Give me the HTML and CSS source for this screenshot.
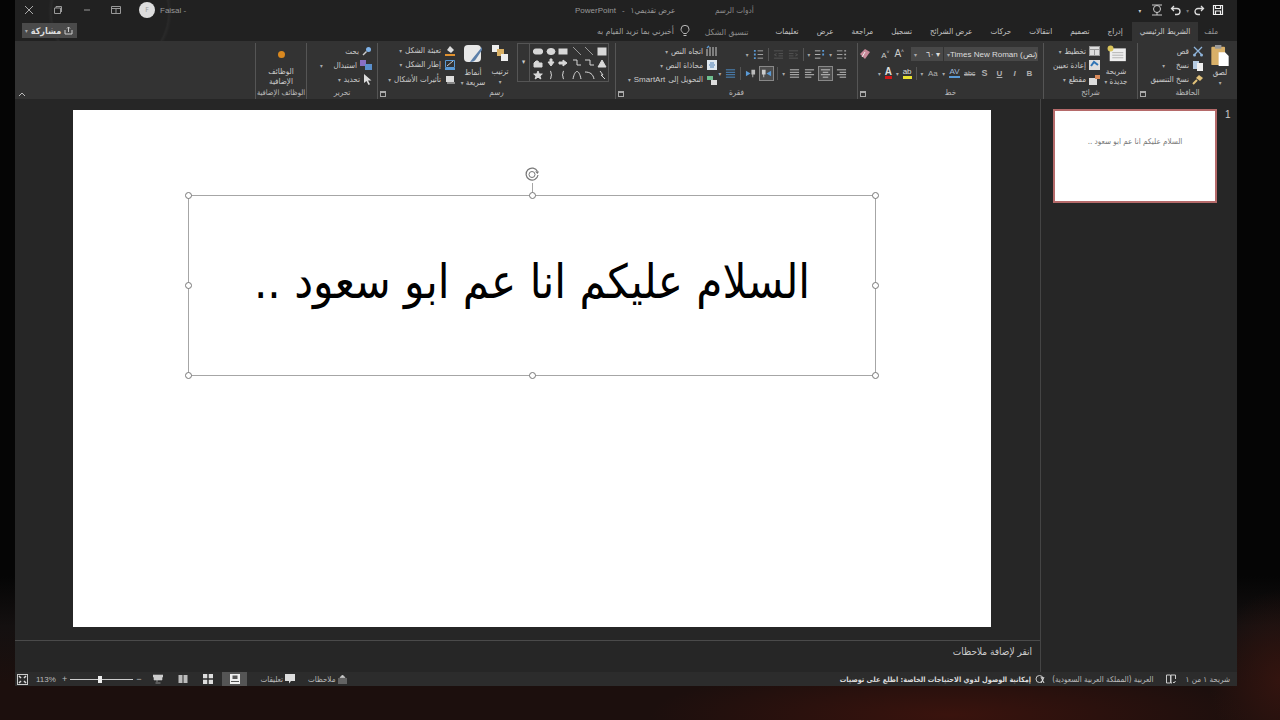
FILE: index.html
```html
<!DOCTYPE html>
<html lang="ar">
<head>
  <meta charset="utf-8">
  <title>PowerPoint</title>
  <link rel="stylesheet" href="styles.css">
</head>
<body>
  <div class="window">

    <div class="titlebar">
      <div class="win-btns">
        <svg width="10" height="10" viewBox="0 0 10 10"><path d="M1 1l8 8M9 1l-8 8" stroke="#aaa" fill="none"/></svg>
        <svg width="10" height="10" viewBox="0 0 10 10"><path d="M1.5 3h6v5.5h-6zM3 3V1.5h5.5V7" stroke="#999" fill="none"/></svg>
        <svg width="10" height="10" viewBox="0 0 10 10"><path d="M2 5h6" stroke="#999" fill="none"/></svg>
        <svg width="10" height="10" viewBox="0 0 10 10"><path d="M.5 1.5h9v7h-9zM.5 3.5h9M5 3.5v5" stroke="#999" fill="none"/></svg>
      </div>
      <div class="avatar">F</div>
      <div class="user">Faisal -</div>
      <div class="doc-title"><span>PowerPoint</span> <span>-</span> <span dir="rtl">عرض تقديمي١</span></div>
      <div class="tools-title">أدوات الرسم</div>
      <div class="qat">
        <span class="qat-more">▾</span>
        <svg class="touch" width="12" height="12" viewBox="0 0 12 12"><circle cx="6" cy="5" r="3.5" stroke="#ccc" fill="none"/><path d="M1 1h10M1 11h10M6 8v3" stroke="#ccc"/></svg>
        <svg width="12" height="12" viewBox="0 0 12 12"><path d="M4 2L1.5 4.5 4 7M2 4.5h5a3 3 0 0 1 0 6H5" stroke="#ddd" stroke-width="1.3" fill="none"/></svg>
        <span class="qat-more dim">▾</span>
        <svg width="12" height="12" viewBox="0 0 12 12"><path d="M8 2l2.500 2.500L8 7M10 4.500H5a3 3 0 0 0 0 6h2" stroke="#ddd" stroke-width="1.3" fill="none"/></svg>
        <svg class="save" width="12" height="12" viewBox="0 0 12 12"><path d="M1.5 1.5h9v9h-9zM3.5 1.5v3h5v-3M3.5 10.5V7h5v3.5" stroke="#eee" stroke-width="1.2" fill="none"/></svg>
      </div>
    </div>

    <div class="tabrow">
      <div class="share">
        <span class="caret">▾</span><b>مشاركة</b>
        <svg width="9" height="9" viewBox="0 0 9 9"><path d="M1 4v4h7V4M4.5 6V1M3 2.500L4.500 1 6 2.500" stroke="#ccc" fill="none"/></svg>
      </div>
      <div class="tell">
        <span>أخبرني بما تريد القيام به</span>
        <svg width="10" height="12" viewBox="0 0 10 12"><path d="M3.500 8.500C2.500 7 1 6.200 1 4.300a4 4 0 0 1 8 0C9 6.200 7.500 7 6.500 8.500zM3.500 10.500h3" stroke="#bbb" fill="none"/></svg>
      </div>
      <div class="tabs" dir="rtl">
        <span class="tab tab-file">ملف</span>
        <span class="tab tab-active">الشريط الرئيسي</span>
        <span class="tab">إدراج</span>
        <span class="tab">تصميم</span>
        <span class="tab">انتقالات</span>
        <span class="tab">حركات</span>
        <span class="tab">عرض الشرائح</span>
        <span class="tab">تسجيل</span>
        <span class="tab">مراجعة</span>
        <span class="tab">عرض</span>
        <span class="tab">تعليمات</span>
        <span class="tab tab-format">تنسيق الشكل</span>
      </div>
    </div>

    <div class="ribbon">
      <div class="collapse-area">
        <svg width="8" height="5" viewBox="0 0 8 5"><path d="M1 4l3-3 3 3" stroke="#bbb" fill="none"/></svg>
      </div>

      <section class="group g-addins">
        <div class="g-body addin">
          <i class="dot"></i>
          <span>الوظائف<br>الإضافية</span>
        </div>
        <div class="g-label">الوظائف الإضافية</div>
      </section>

      <section class="group g-edit">
        <div class="g-body lines">
          <div class="line"><span>بحث</span>
            <svg width="10" height="10" viewBox="0 0 10 10"><circle cx="6.5" cy="3.5" r="2.5" fill="#7fb2e8"/><path d="M4.5 5.5L1 9" stroke="#ccc" stroke-width="1.5"/></svg></div>
          <div class="line"><span class="caret wide">▾</span><span>استبدال</span>
            <svg width="12" height="10" viewBox="0 0 12 10"><rect x="0" y="0" width="6" height="6" fill="#8a6fc4"/><rect x="5" y="4" width="7" height="6" fill="#5a8fcc"/></svg></div>
          <div class="line"><span class="caret">▾</span><span>تحديد</span>
            <svg width="9" height="11" viewBox="0 0 9 11"><path d="M1 0v9l2.500-2 2 4 1.500-.8-2-3.700h3.500z" fill="#ddd"/></svg></div>
        </div>
        <div class="g-label">تحرير</div>
      </section>

      <section class="group g-draw">
        <div class="g-body draw">
          <div class="lines">
            <div class="line"><span class="caret">▾</span><span>تعبئة الشكل</span>
              <svg width="12" height="11" viewBox="0 0 12 11"><path d="M3 5l3-4 4 4-3 3z" fill="#ddd"/><rect x="1" y="9" width="10" height="2" fill="#e0912f"/></svg></div>
            <div class="line"><span class="caret">▾</span><span>إطار الشكل</span>
              <svg width="12" height="11" viewBox="0 0 12 11"><path d="M1.5 1.5h9v7h-9z" stroke="#5a9ad6" fill="none"/><path d="M3 7l6-5" stroke="#ccc"/><rect x="1" y="9" width="10" height="2" fill="#5a9ad6"/></svg></div>
            <div class="line"><span class="caret">▾</span><span>تأثيرات الأشكال</span>
              <svg width="12" height="11" viewBox="0 0 12 11"><rect x="2" y="2" width="8" height="6" fill="#ddd"/><rect x="3" y="8" width="8" height="2" fill="#888"/></svg></div>
          </div>
          <div class="big styles">
            <svg width="20" height="20" viewBox="0 0 20 20"><rect x="1" y="1" width="17" height="17" rx="4" fill="#e8e8e8"/><path d="M19 3L10 14l-3 4c3 0 5-1 6-3l6-9z" fill="#5b7ea8"/></svg>
            <span>أنماط<br><i class="caret">▾</i> سريعة</span>
          </div>
          <div class="big arrange">
            <svg width="18" height="18" viewBox="0 0 18 18"><rect x="1" y="1" width="7" height="7" fill="#eee"/><rect x="6" y="5" width="7" height="7" fill="#d9b064"/><rect x="10" y="10" width="7" height="7" fill="#eee"/></svg>
            <span>ترتيب</span><span class="caret">▾</span>
          </div>
          <div class="gallery">
            <div class="gal-more">▾</div>
            <svg width="78" height="38" viewBox="0 0 78 38">
              <g fill="#d8d8d8" stroke="#d8d8d8">
                <rect x="3.5" y="5" width="9" height="5" rx="2"/>
                <ellipse cx="21" cy="7.5" rx="4" ry="3"/>
                <rect x="29" y="5" width="8" height="5"/>
                <path d="M43 3l8 8M55 3l8 8" fill="none" stroke="#999"/>
                <rect x="68" y="4" width="8" height="7"/>
                <path d="M4 23v-4l2-2h2l1 2h3v4z"/>
                <path d="M20 15v3h-2l3 4 3-4h-2v-3z"/>
                <path d="M29 18h4v-2l4 3-4 3v-2h-4z"/>
                <path d="M43 16h4v5h4M55 16h5v5h4" fill="none"/>
                <path d="M68 23l4-7 4 7z"/>
                <path d="M8 27l1.300 3h3l-2.400 2 1 3-2.900-1.800L5.100 35l1-3-2.400-2h3z"/>
                <path d="M20 27c2 0 0 4 2 4-2 0 0 4-2 4M34 27c-2 0 0 4-2 4 2 0 0 4 2 4M43 35c2-10 6-10 8 0M55 28c5 0 8 2 9 7" fill="none"/>
                <path d="M70 27l3 4-2 0 4 4" fill="none"/>
              </g>
            </svg>
          </div>
        </div>
        <div class="g-label">رسم</div>
        <i class="launcher"></i>
      </section>

      <section class="group g-para">
        <div class="g-body para">
          <div class="lines">
            <div class="line"><span class="caret">▾</span><span>اتجاه النص</span>
              <svg width="12" height="12" viewBox="0 0 12 12"><path d="M1 11V4M4 11V2M7 11V2M10 11V2" stroke="#ccc"/><path d="M1 3l2-2" stroke="#5a9ad6" stroke-width="1.5"/></svg></div>
            <div class="line"><span class="caret">▾</span><span>محاذاة النص</span>
              <svg width="12" height="12" viewBox="0 0 12 12"><rect x="1" y="1" width="10" height="10" fill="#dfe8f0"/><path d="M4 4h4M3 6h6M4 8h4" stroke="#4a7fb5"/></svg></div>
            <div class="line"><span class="caret">▾</span><span class="latin">SmartArt</span><span>التحويل إلى</span>
              <svg width="12" height="12" viewBox="0 0 12 12"><rect x="1" y="2" width="6" height="4" fill="#6fbf8f"/><rect x="5" y="6" width="6" height="5" fill="#ddd"/></svg></div>
          </div>
          <div class="para-rows">
            <div class="tools">
              <span class="caret">▾</span>
              <svg class="ic" viewBox="0 0 12 12"><path d="M5 2h6M5 6h6M5 10h6" stroke="#aaa"/><path d="M1 1h2v2H1zM1 5h2v2H1zM1 9h2v2H1z" fill="#5a9ad6"/></svg>
              <i class="tsep"></i>
              <svg class="ic" viewBox="0 0 12 12"><path d="M1 2h10M6 5h5M6 7.500h5M1 10h10M4 5L1.500 6.300 4 7.500" stroke="#555" fill="none"/></svg>
              <svg class="ic" viewBox="0 0 12 12"><path d="M1 2h10M1 5h5M1 7.500h5M1 10h10M8 5l2.500 1.300L8 7.500" stroke="#555" fill="none"/></svg>
              <i class="tsep"></i>
              <span class="caret">▾</span>
              <svg class="ic" viewBox="0 0 12 12"><path d="M1 2h6M1 6h6M1 10h6" stroke="#bbb"/><path d="M9 1h2v2H9zM9 5h2v2H9z" fill="#5a9ad6"/></svg>
              <span class="caret">▾</span>
              <svg class="ic" viewBox="0 0 12 12"><path d="M1 2h6M1 6h6M1 10h6" stroke="#aaa"/><path d="M9 2h2M9 6h2M9 10h2" stroke="#aaa" stroke-width="1.5"/></svg>
            </div>
            <div class="tools">
              <span class="caret">▾</span>
              <svg class="ic" viewBox="0 0 12 12"><path d="M1 2h10M1 4.700h10M1 7.300h10M1 10h10" stroke="#4f8fcc"/></svg>
              <i class="tsep"></i>
              <svg class="ic" viewBox="0 0 12 12"><path d="M1 3l5 3-5 3z" fill="#5a9ad6"/><path d="M7 2h4v5H9v3H8V7H7z" fill="#bbb"/></svg>
              <span class="ic-on"><svg class="ic" viewBox="0 0 12 12"><path d="M11 3L6 6l5 3z" fill="#5a9ad6"/><path d="M1 2h4v5H3.500v3h-1V7H1z" fill="#ccc"/></svg></span>
              <i class="tsep"></i>
              <span class="caret">▾</span>
              <svg class="ic" viewBox="0 0 12 12"><path d="M1 2h10M1 4.700h10M1 7.300h10M1 10h10" stroke="#ccc"/></svg>
              <svg class="ic" viewBox="0 0 12 12"><path d="M1 2h10M1 4.700h7M1 7.300h10M1 10h7" stroke="#ccc"/></svg>
              <span class="ic-on"><svg class="ic" viewBox="0 0 12 12"><path d="M1 2h10M3 4.700h6M1 7.300h10M3 10h6" stroke="#ccc"/></svg></span>
              <svg class="ic" viewBox="0 0 12 12"><path d="M1 2h10M4 4.700h7M1 7.300h10M4 10h7" stroke="#ccc"/></svg>
            </div>
          </div>
        </div>
        <div class="g-label">فقرة</div>
        <i class="launcher"></i>
      </section>

      <section class="group g-font">
        <div class="g-body font">
          <div class="font-row">
            <svg width="12" height="12" viewBox="0 0 12 12"><path d="M1 6l5-5 5 3-5 7z" fill="#c98a9a"/><path d="M3 9l3-5" stroke="#eee"/></svg>
            <i class="tsep"></i>
            <span class="a-small">A<sup>˅</sup></span>
            <span class="a-big">A<sup>˄</sup></span>
            <span class="combo size"><span class="caret">▾</span><span class="combo-val">٦٠ ▾</span></span>
            <span class="combo face"><span class="caret">▾</span><span class="combo-val">Times New Roman (<span dir="rtl">نص</span>)</span></span>
          </div>
          <div class="font-row row2">
            <span class="caret">▾</span>
            <span class="color-a">A</span>
            <span class="caret">▾</span>
            <span class="highlight">ab</span>
            <i class="tsep"></i>
            <span class="caret">▾</span><span class="fmt">Aa</span>
            <span class="caret">▾</span><span class="fmt av">AV</span>
            <span class="fmt strike">abc</span>
            <span class="fmt shadow">S</span>
            <span class="fmt under">U</span>
            <span class="fmt ital">I</span>
            <span class="fmt bold">B</span>
          </div>
        </div>
        <div class="g-label">خط</div>
        <i class="launcher"></i>
      </section>

      <section class="group g-slides">
        <div class="g-body slides">
          <div class="lines">
            <div class="line"><span class="caret">▾</span><span>تخطيط</span>
              <svg width="11" height="10" viewBox="0 0 11 10"><rect width="11" height="10" fill="#999"/><rect x="1" y="1" width="9" height="2" fill="#ddd"/><rect x="1" y="4" width="4" height="5" fill="#ddd"/><rect x="6" y="4" width="4" height="5" fill="#ddd"/></svg></div>
            <div class="line"><span>إعادة تعيين</span>
              <svg width="11" height="10" viewBox="0 0 11 10"><rect width="11" height="10" fill="#ddd"/><path d="M2 6l3-4 4 3" stroke="#2f74b5" stroke-width="2" fill="none"/></svg></div>
            <div class="line"><span class="caret">▾</span><span>مقطع</span>
              <svg width="11" height="10" viewBox="0 0 11 10"><rect y="3" width="8" height="7" fill="#ddd"/><rect x="6" width="5" height="4" fill="#d98a5a"/></svg></div>
          </div>
          <div class="big new-slide">
            <svg width="21" height="17" viewBox="0 0 24 20"><rect x="4" y="4" width="19" height="15" fill="#eee"/><path d="M7 9h13M7 12h13M7 15h13" stroke="#aaa"/><circle cx="5" cy="4" r="3.5" fill="#d9c45a"/></svg>
            <span>شريحة<br><i class="caret">▾</i> جديدة</span>
          </div>
        </div>
        <div class="g-label">شرائح</div>
      </section>

      <section class="group g-clip">
        <div class="g-body clip">
          <div class="lines">
            <div class="line"><span>قص</span>
              <svg width="12" height="11" viewBox="0 0 12 11"><path d="M2 1l7 7M10 1L3 8" stroke="#8fb5dc" stroke-width="1.3"/><circle cx="2.5" cy="9" r="1.5" fill="#8fb5dc"/><circle cx="9.5" cy="9" r="1.5" fill="#8fb5dc"/></svg></div>
            <div class="line"><span class="caret wide">▾</span><span>نسخ</span>
              <svg width="12" height="11" viewBox="0 0 12 11"><rect x="1" y="1" width="6" height="8" fill="#b5cbe2"/><rect x="5" y="3" width="6" height="8" fill="#eee"/></svg></div>
            <div class="line"><span>نسخ التنسيق</span>
              <svg width="12" height="11" viewBox="0 0 12 11"><path d="M7 1l4 3-3 3-4-3z" fill="#e2c27a"/><path d="M5 6L1 10" stroke="#e2c27a" stroke-width="2"/></svg></div>
          </div>
          <div class="big paste">
            <svg width="18" height="21" viewBox="0 0 19 23"><rect y="2" width="15" height="20" rx="1" fill="#d9b068"/><rect x="4" y="0" width="7" height="4" fill="#999"/><path d="M8 8h7l4 4v11H8z" fill="#fff"/></svg>
            <span>لصق</span><span class="caret">▾</span>
          </div>
        </div>
        <div class="g-label">الحافظة</div>
        <i class="launcher"></i>
      </section>
    </div>

    <div class="workspace">
      <div class="editor">
        <div class="stage">
          <div class="slide">
            <div class="textbox">
              <div class="rotate">
                <svg width="17" height="17" viewBox="0 0 17 17"><path d="M13.500 5.500A6 6 0 1 0 14 9" stroke="#777" stroke-width="1.2" fill="none"/><circle cx="8" cy="8.5" r="3" stroke="#777" fill="none"/><path d="M11 5.500h4l-1.500 2.500z" fill="#777"/></svg>
              </div>
              <i class="h h-tl"></i><i class="h h-tc"></i><i class="h h-tr"></i>
              <i class="h h-ml"></i><i class="h h-mr"></i>
              <i class="h h-bl"></i><i class="h h-bc"></i><i class="h h-br"></i>
              <p class="slide-text" dir="rtl">السلام عليكم انا عم ابو سعود ..</p>
            </div>
          </div>
        </div>
        <div class="notes">انقر لإضافة ملاحظات</div>
      </div>
      <aside class="thumbs">
        <div class="thumb"><p dir="rtl">السلام عليكم انا عم ابو سعود ..</p></div>
        <div class="thumb-num">1</div>
      </aside>
    </div>

    <div class="statusbar">
      <div class="st-left">
        <svg class="fit" width="11" height="11" viewBox="0 0 11 11"><rect x=".5" y=".5" width="10" height="10" stroke="#ccc" fill="none"/><path d="M2 2l2 2M9 2L7 4M2 9l2-2M9 9L7 7" stroke="#ddd" stroke-width="1.5"/></svg>
        <span class="zoom-val">113%</span>
        <span class="zoom-sign">+</span>
        <div class="slider"><i></i></div>
        <span class="zoom-sign">−</span>
        <div class="views">
          <svg width="10" height="10" viewBox="0 0 10 10"><path d="M0 1h10v2H9v3H1V3H0zM4 6v2M2.500 9h5" fill="#ccc" stroke="#ccc" stroke-width=".6"/></svg>
          <svg width="10" height="10" viewBox="0 0 10 10"><path d="M.5 1h4v8h-4zM5.500 1h4v8h-4z" fill="#bbb"/></svg>
          <svg width="10" height="10" viewBox="0 0 10 10"><path d="M0 0h4.300v4.300H0zM5.700 0H10v4.300H5.700zM0 5.700h4.300V10H0zM5.700 5.700H10V10H5.700z" fill="#ddd"/></svg>
          <span class="view-on"><svg width="10" height="10" viewBox="0 0 10 10"><rect width="10" height="10" fill="#eee"/><rect x="2.5" y="1.5" width="5" height="3.5" fill="#555"/><rect x="1" y="7" width="8" height="1" fill="#555"/></svg></span>
        </div>
        <span class="st-item"><span>تعليقات</span>
          <svg width="10" height="10" viewBox="0 0 10 10"><path d="M0 0h10v7H6L4 9.500V7H0z" fill="#ddd"/></svg></span>
        <span class="st-item"><span>ملاحظات</span>
          <svg width="9" height="9" viewBox="0 0 9 9"><path d="M4.500 0L7 2.500H2zM0 4h9M0 6h9M0 8h9" fill="#ccc" stroke="#ccc" stroke-width=".7"/></svg></span>
      </div>
      <div class="st-right">
        <span class="st-bold">إمكانية الوصول لذوي الاحتياجات الخاصة: اطلع على توصيات</span>
        <svg width="10" height="10" viewBox="0 0 10 10"><circle cx="4.5" cy="5" r="3.5" stroke="#ccc" fill="none"/><path d="M6 3l3 6M9 3L6 9" stroke="#ddd"/></svg>
        <span class="st-lang">العربية (المملكة العربية السعودية)</span>
        <svg class="st-book" width="10" height="10" viewBox="0 0 10 10"><path d="M.5 1h4v8h-4zM6 9H5V1h4.500v4M7 8l1 1 1.500-2" stroke="#ccc" fill="none"/></svg>
        <span class="st-slide">شريحة ١ من ١</span>
      </div>
    </div>
  </div>
</body>
</html>
```

FILE: styles.css
```css
* {
  box-sizing: border-box;
}

html, body {
  height: 100%;
}

body {
  margin: 0;
  overflow: hidden;
  color: #ccc;
  font-family: "DejaVu Sans Condensed", "DejaVu Sans", sans-serif;
  font-size: 8px;
  background:
    radial-gradient(ellipse 300px 50px at 950px 715px, #3a130d 0%, rgba(58, 19, 13, 0) 100%),
    radial-gradient(ellipse 70px 90px at 1280px 680px, #33140f 0%, rgba(51, 20, 15, 0) 100%),
    linear-gradient(180deg, #050505 0%, #050505 80%, #141010 87%, #1c0f0d 95%, #1c0f0d 100%);
}

svg {
  display: block;
  flex: none;
}

.caret {
  font-size: 6px;
  font-style: normal;
  color: #aaa;
}

.latin {
  font-family: "Liberation Sans", sans-serif;
}

.window {
  display: flex;
  flex-direction: column;
  width: 1222px;
  height: 686px;
  margin-left: 15px;
  background:
    radial-gradient(circle 62px at 95px 12px, rgba(255, 255, 255, 0) 92%, rgba(255, 255, 255, .035) 95%, rgba(255, 255, 255, 0) 100%) no-repeat,
    linear-gradient(180deg, #212121 41px, #262626 41px);
}

/* title bar */
.titlebar {
  display: flex;
  align-items: center;
  height: 20px;
  color: #999;
}

.win-btns {
  display: flex;
  gap: 19px;
  margin-left: 9px;
}

.avatar {
  display: flex;
  align-items: center;
  justify-content: center;
  width: 16px;
  height: 16px;
  margin-left: 18px;
  border-radius: 50%;
  background: #ddd;
  color: #999;
  font-size: 7px;
}

.user {
  width: 40px;
  margin-left: 5px;
  font-family: "Liberation Sans", sans-serif;
}

.doc-title {
  display: flex;
  gap: 6px;
  width: 140px;
  margin-left: 375px;
}

.doc-title span:first-child,
.doc-title span:nth-child(2) {
  font-family: "Liberation Sans", sans-serif;
}

.tools-title {
  width: 60px;
  color: #8a8a8a;
}

.qat {
  display: flex;
  align-items: center;
  gap: 4px;
  margin-left: auto;
  margin-right: 13px;
}

.qat-more {
  font-size: 6px;
  color: #ccc;
}

.qat-more.dim {
  color: #777;
}

.touch {
  margin: 0 3px 0 6px;
}

.save {
  margin-left: 3px;
}

/* tabs */
.tabrow {
  display: flex;
  align-items: center;
  height: 21px;
}

.share {
  display: flex;
  align-items: center;
  gap: 3px;
  width: 55px;
  height: 15px;
  margin-left: 7px;
  padding-left: 3px;
  background: #4a4a4a;
  color: #ddd;
  font-size: 9px;
}

.tell {
  display: flex;
  align-items: center;
  gap: 6px;
  margin-left: 520px;
  font-size: 8.5px;
  color: #a0a0a0;
}

.tabs {
  display: flex;
  align-items: flex-end;
  height: 100%;
  margin-left: auto;
  margin-right: 13px;
}

.tab {
  display: flex;
  align-items: center;
  height: 19px;
  padding: 0 9px;
  color: #c4c4c4;
}

.tab-file {
  padding: 0 6px;
  color: #999;
}

.tab-active {
  padding: 0 8px;
  background: #333;
  color: #ccc;
}

.tab-format {
  padding-right: 18px;
  font-size: 8.5px;
  color: #8a8a8a;
}

/* ribbon */
.ribbon {
  display: flex;
  height: 58px;
  background: #333;
}

.collapse-area {
  display: flex;
  align-items: flex-end;
  width: 240px;
  padding: 0 0 2px 3px;
}

.group {
  position: relative;
  display: flex;
  flex-direction: column;
  margin-top: 2px;
  border-left: 1px solid #555;
}

.g-body {
  flex: 1;
  display: flex;
  min-height: 0;
}

.g-label {
  height: 12px;
  line-height: 12px;
  text-align: center;
  color: #bbb;
  white-space: nowrap;
}

.g-addins .g-label {
  font-size: 7.5px;
}

.launcher {
  position: absolute;
  left: 2px;
  bottom: 2px;
  width: 6px;
  height: 6px;
  border: 1px solid #aaa;
  border-top-width: 2px;
}

.g-addins { width: 51px; }
.g-edit { width: 71px; }
.g-draw { width: 238px; }
.g-para { width: 242px; }
.g-font { width: 186px; }
.g-slides { width: 94px; }
.g-clip { width: 100px; }

.lines {
  display: flex;
  flex-direction: column;
  padding-top: 1px;
}

.line {
  display: flex;
  align-items: center;
  justify-content: flex-end;
  gap: 3px;
  height: 14.5px;
  white-space: nowrap;
}

.caret.wide {
  margin-right: 8px;
}

.addin {
  flex-direction: column;
  align-items: center;
  padding-top: 8px;
  line-height: 10px;
  text-align: center;
}

.dot {
  width: 7px;
  height: 7px;
  margin-bottom: 9px;
  border-radius: 50%;
  background: #d9881f;
}

.g-edit .lines {
  width: 65px;
}

.big {
  display: flex;
  flex-direction: column;
  align-items: center;
  line-height: 10px;
  text-align: center;
}

.big svg {
  margin-bottom: 4px;
}

.draw {
  justify-content: flex-end;
}

.draw > .lines {
  width: 78px;
  margin-right: 3px;
  padding-top: 0;
}

.draw .styles {
  width: 28px;
  margin-right: 1px;
  padding-top: 1px;
}

.draw .arrange {
  width: 24px;
  margin-right: 5px;
  padding-top: 1px;
}

.draw .arrange svg {
  margin-bottom: 5px;
}

.gallery {
  display: flex;
  width: 92px;
  height: 39px;
  margin-right: 6px;
  border: 1px solid #555;
}

.gal-more {
  width: 13px;
  padding-top: 14px;
  font-size: 7px;
  text-align: center;
  border-right: 1px solid #555;
}

.para {
  justify-content: space-between;
}

.para > .lines {
  width: 102px;
}

.para-rows {
  display: flex;
  flex-direction: column;
  gap: 6px;
  padding: 5px 10px 0 0;
}

.tools {
  display: flex;
  align-items: center;
  justify-content: flex-end;
  gap: 4px;
  height: 13px;
}

.ic {
  width: 11px;
  height: 11px;
}

.ic-on {
  display: block;
  margin: 0 -1px;
  padding: 1px;
  background: #4c4c4c;
  border: 1px solid #888;
}

.tsep {
  width: 1px;
  height: 13px;
  background: #555;
}

.font {
  flex-direction: column;
  gap: 4px;
  padding: 4px 5px 0 4px;
}

.font-row {
  display: flex;
  align-items: center;
  justify-content: flex-end;
  gap: 5px;
  height: 14px;
}

.row2 {
  gap: 4px;
  margin-top: 1px;
  margin-right: 3px;
}

.a-small, .a-big {
  font-family: "Liberation Sans", sans-serif;
  color: #ccc;
}

.a-small { font-size: 8px; }
.a-big { font-size: 10px; }

.a-small sup, .a-big sup {
  font-size: 5px;
}

.combo {
  flex: none;
  display: flex;
  align-items: center;
  justify-content: space-between;
  height: 14px;
  padding: 0 3px;
  background: #484848;
  color: #ddd;
  font-family: "Liberation Sans", sans-serif;
  font-size: 8px;
  white-space: nowrap;
}

.size { width: 32px; margin-left: 2px; margin-right: -4px; }
.face { width: 94px; }

.fmt {
  width: 11px;
  font-family: "Liberation Sans", sans-serif;
  font-size: 8px;
  text-align: center;
  color: #b0b0b0;
}

.av { color: #9fb8d8; border-bottom: 2px solid #5a9ad6; line-height: 8px; }
.strike { font-size: 7px; text-decoration: line-through; }
.shadow { font-weight: bold; font-size: 9px; }
.under { text-decoration: underline; font-weight: bold; }
.ital { font-style: italic; font-weight: bold; }
.bold { font-weight: bold; }

.color-a {
  border-bottom: 3px solid #d01818;
  line-height: 9px;
  font-family: "Liberation Sans", sans-serif;
  font-size: 10px;
  font-weight: bold;
  color: #ddd;
}

.highlight {
  border-bottom: 3px solid #e8e030;
  line-height: 8px;
  font-family: "Liberation Sans", sans-serif;
  color: #ddd;
}

.slides {
  justify-content: flex-end;
}

.slides .new-slide {
  width: 32px;
  margin-right: 5px;
  padding-top: 2px;
}

.slides .new-slide svg {
  margin-bottom: 5px;
}

.clip {
  justify-content: flex-end;
  padding-right: 7px;
}

.clip > .lines {
  margin-right: 6px;
}

.clip .paste {
  width: 20px;
  padding-top: 2px;
}

.clip .paste svg {
  margin-bottom: 2px;
}

/* slide area */
.workspace {
  flex: 1;
  display: flex;
  min-height: 0;
}

.editor {
  display: flex;
  flex-direction: column;
  width: 1026px;
  border-right: 1px solid #444;
}

.stage {
  flex: 1;
  padding: 11px 0 0 58px;
}

.slide {
  width: 918px;
  height: 517px;
  padding: 85px 0 0 115px;
  background: #fff;
}

.textbox {
  position: relative;
  display: flex;
  align-items: center;
  justify-content: center;
  width: 688px;
  height: 181px;
  border: 1px solid #a6a6a6;
}

.slide-text {
  margin: 0 0 8px;
  color: #000;
  font-family: "DejaVu Sans Condensed", "DejaVu Sans", sans-serif;
  font-size: 47px;
  white-space: nowrap;
}

.rotate {
  position: absolute;
  top: -30px;
  left: 335px;
}

.rotate::after {
  content: "";
  position: absolute;
  top: 17px;
  left: 8px;
  width: 1px;
  height: 12px;
  background: #a6a6a6;
}

.h {
  position: absolute;
  width: 7px;
  height: 7px;
  border: 1px solid #777;
  border-radius: 50%;
  background: #fff;
}

.h-tl { top: -4px; left: -4px; }
.h-tc { top: -4px; left: 340px; }
.h-tr { top: -4px; right: -4px; }
.h-ml { top: 86px; left: -4px; }
.h-mr { top: 86px; right: -4px; }
.h-bl { bottom: -4px; left: -4px; }
.h-bc { bottom: -4px; left: 340px; }
.h-br { bottom: -4px; right: -4px; }

.notes {
  height: 32px;
  padding: 5px 8px 0 0;
  border-top: 1px solid #4a4a4a;
  font-size: 10px;
  color: #ccc;
  text-align: right;
}

.thumbs {
  flex: 1;
  display: flex;
  align-items: flex-start;
  padding: 10px 0 0 12px;
}

.thumb {
  display: flex;
  justify-content: center;
  width: 164px;
  height: 94px;
  padding-top: 26px;
  background: #fff;
  border: 2px solid #b56a6a;
}

.thumb p {
  margin: 0;
  color: #777;
  font-size: 8px;
  white-space: nowrap;
}

.thumb-num {
  margin-left: 8px;
  color: #ccc;
  font-family: "Liberation Sans", sans-serif;
  font-size: 10px;
}

/* status bar */
.statusbar {
  display: flex;
  align-items: center;
  justify-content: space-between;
  height: 14px;
  background: #2c2c2c;
  color: #bbb;
}

.st-left {
  display: flex;
  align-items: center;
  height: 100%;
}

.fit {
  margin-left: 2px;
}

.zoom-val {
  margin: 0 6px 0 8px;
  font-family: "Liberation Sans", sans-serif;
}

.zoom-sign {
  font-family: "Liberation Sans", sans-serif;
  font-size: 9px;
}

.slider {
  position: relative;
  width: 63px;
  height: 1px;
  margin: 0 3px;
  background: #ccc;
}

.slider i {
  position: absolute;
  top: -3px;
  left: 28px;
  width: 4px;
  height: 7px;
  background: #eee;
}

.views {
  display: flex;
  align-items: center;
  gap: 15px;
  height: 100%;
  margin-left: 12px;
}

.view-on {
  display: flex;
  align-items: center;
  justify-content: center;
  width: 25px;
  height: 100%;
  margin-left: -6px;
  background: #555;
}

.st-item {
  display: flex;
  align-items: center;
  gap: 2px;
  margin-left: 13px;
}

.st-right {
  display: flex;
  align-items: center;
  gap: 4px;
  padding-right: 7px;
}

.st-bold {
  font-weight: bold;
  font-size: 7.3px;
  color: #ddd;
}

.st-lang {
  margin-left: 3px;
}

.st-book {
  margin: 0 6px 0 8px;
}
```
